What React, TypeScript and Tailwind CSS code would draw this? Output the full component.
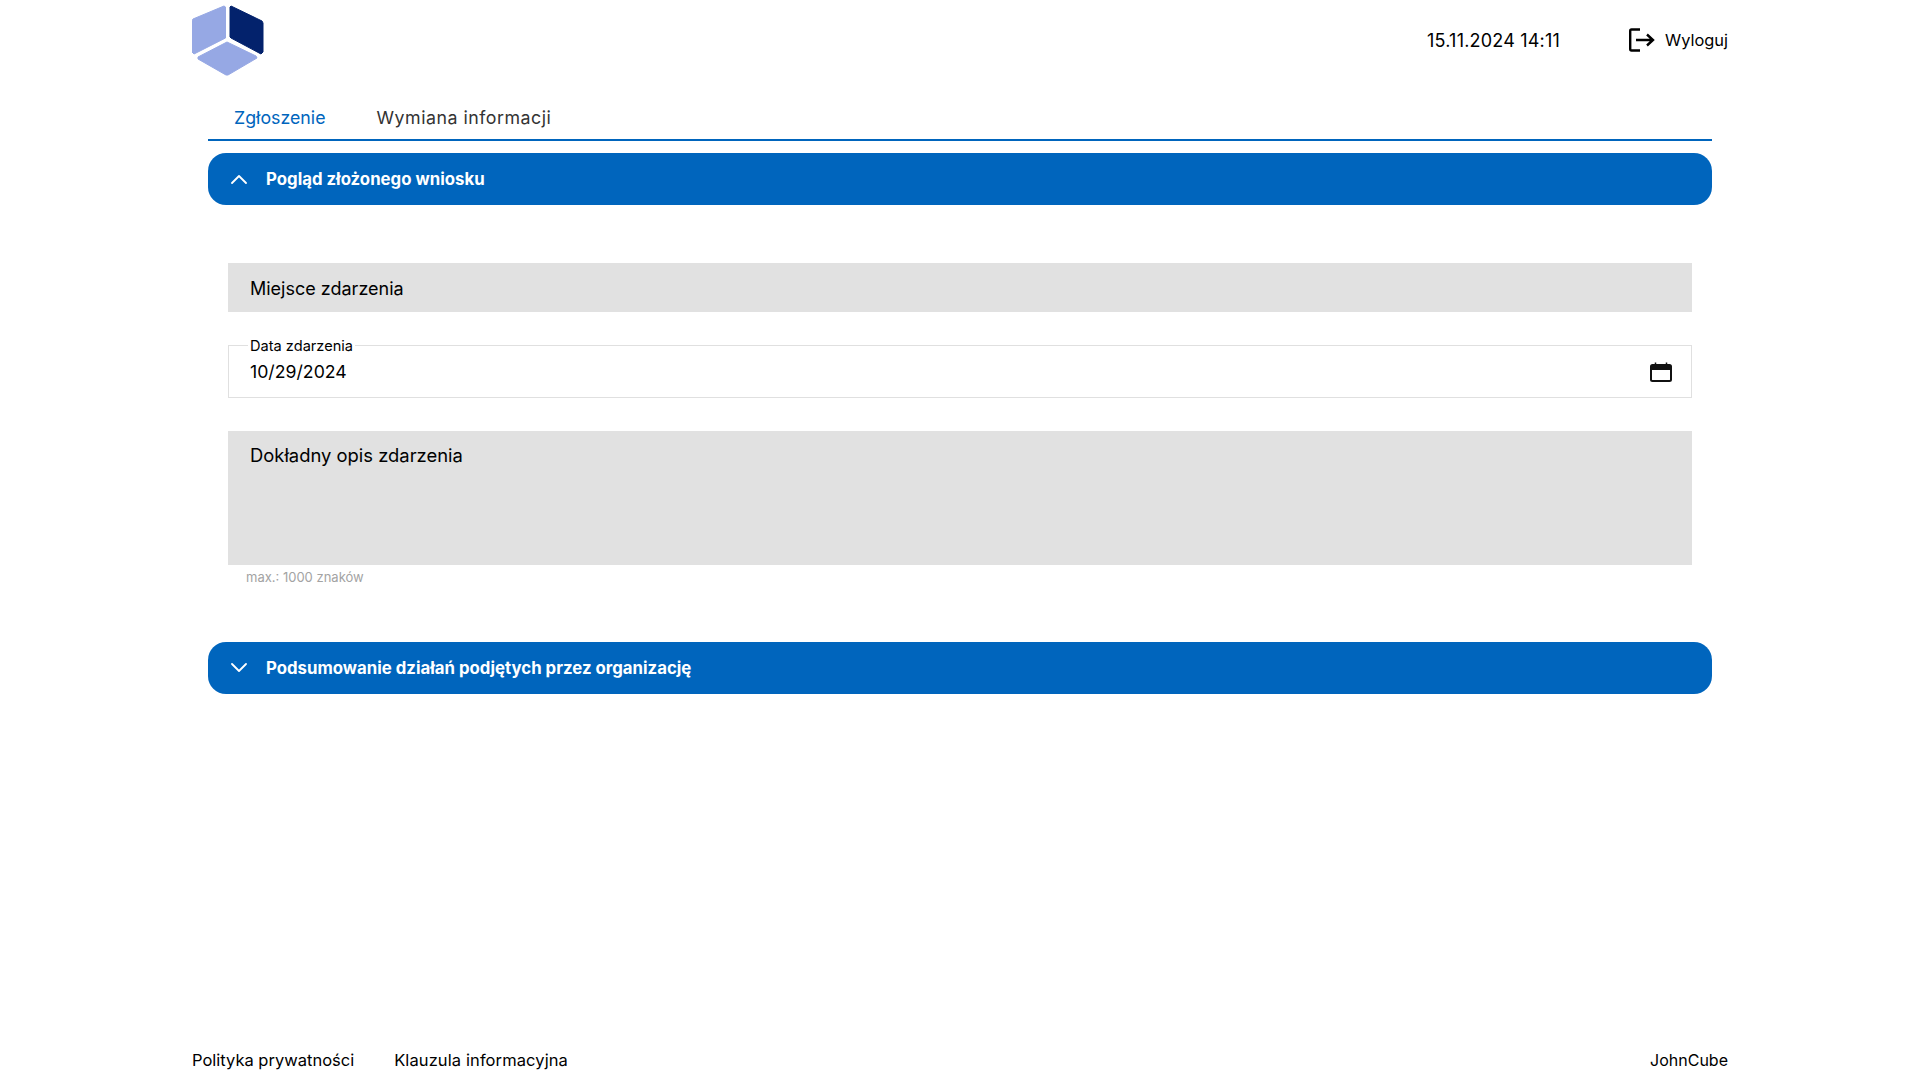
import React from "react";

const font = "font-['Inter',sans-serif]";

function Logo() {
  return (
    <svg viewBox="0 0 72 72" className="w-[72px] h-[72px]" strokeLinejoin="round">
      <path d="M32 2 L33.5 3 L33.5 34 L2 50 L0 48 L0 17 L1 15 Z" fill="#96a8e4" stroke="#96a8e4" strokeWidth="1" />
      <path d="M39 2 L70 17 L71 19 L71 48 L69 50 L39 34 L38 33 L38 3 Z" fill="#03226c" stroke="#03226c" strokeWidth="1" />
      <path d="M35 38 L64 52 L65 54 L36 71 L34 71 L6 55 L6 53 Z" fill="#96a8e4" stroke="#96a8e4" strokeWidth="1" />
    </svg>
  );
}

function Bar({ title, open }: { title: string; open?: boolean }) {
  return (
    <div className="h-[52px] rounded-[18px] bg-[#0065bd] flex items-center pl-[22px] text-white">
      <svg viewBox="0 0 18 10" className={"w-[18px] h-[10px] " + (open ? "" : "rotate-180")} fill="none" stroke="currentColor" strokeWidth="1.8">
        <path d="M2 9 L9 2 L16 9" strokeLinecap="round" strokeLinejoin="round" />
      </svg>
      <span className="ml-[18px] pt-[2px] text-[16.8px] font-bold">{title}</span>
    </div>
  );
}

export default function App() {
  return (
    <div className={"h-[1079px] bg-white flex flex-col text-black overflow-hidden " + font}>
      {/* Header */}
      <header className="h-[80px] pt-[4px] pl-[192px] pr-[191px] flex items-start justify-between">
        <Logo />
        <div className="flex items-center h-[72px]">
          <span className="text-[18px] tracking-[0.2px]">15.11.2024 14:11</span>
          <svg viewBox="0 0 26 24" className="ml-[69px] w-[26px] h-[24px]" fill="none" stroke="currentColor" strokeWidth="2.4">
            <path d="M11 1.5 H2.5 Q1.2 1.5 1.2 3 V21 Q1.2 22.5 2.5 22.5 H11" />
            <path d="M7 12 H24 M18 6.5 L24 12 L18 17.5" />
          </svg>
          <span className="ml-[10px] text-[16.4px]">Wyloguj</span>
        </div>
      </header>

      {/* Tabs */}
      <div className="ml-[208px] w-[1504px] h-[61px] border-b-2 border-[#0065bd] flex items-center gap-[51px] pl-[26px] pt-[17px] text-[17.8px]">
        <span className="text-[#0065bd]">Zgłoszenie</span>
        <span className="text-[#333333] tracking-[0.5px]">Wymiana informacji</span>
      </div>

      <div className="ml-[208px] w-[1504px] mt-[12px] flex flex-col">
        <Bar title="Pogląd złożonego wniosku" open />

        <div className="px-[20px] pt-[58px]">
          <div className="h-[49px] bg-[#e1e1e1] flex items-center pl-[22px] pt-[2px] text-[18px]">Miejsce zdarzenia</div>

          <div className="relative mt-[33px] h-[53px] border border-[#e0e0e0] flex items-center justify-between pl-[21px] pr-[19px] text-[17.7px]">
            <span className="absolute left-[19px] -top-[8px] bg-white px-[2px] text-[14.6px] leading-[16px]">Data zdarzenia</span>
            <span className="pt-[2px]">10/29/2024</span>
            <svg viewBox="0 0 22 20" className="w-[22px] h-[20px]" fill="none">
              <rect x="1" y="3" width="20" height="16" rx="1.5" stroke="#111" strokeWidth="2" />
              <rect x="1" y="3" width="20" height="5" fill="#111" />
              <path d="M5.5 0.5 V4 M16.5 0.5 V4" stroke="#111" strokeWidth="1.5" />
            </svg>
          </div>

          <div className="mt-[33px] h-[134px] bg-[#e1e1e1] pl-[22px] pt-[11px] text-[18.4px]">Dokładny opis zdarzenia</div>
          <div className="pl-[18px] pt-[4px] text-[13px] text-[#a3a3a3] leading-[16px]">max.: 1000 znaków</div>
        </div>

        <div className="mt-[57px]">
          <Bar title="Podsumowanie działań podjętych przez organizację" />
        </div>
      </div>

      {/* Footer */}
      <footer className="mt-auto h-[36px] pb-[2px] pl-[192px] pr-[191px] flex items-center justify-between text-[16.5px]">
        <div className="flex gap-[40px]">
          <span>Polityka prywatności</span>
          <span className="tracking-[0.1px]">Klauzula informacyjna</span>
        </div>
        <span className="text-[16px]">JohnCube</span>
      </footer>
    </div>
  );
}
